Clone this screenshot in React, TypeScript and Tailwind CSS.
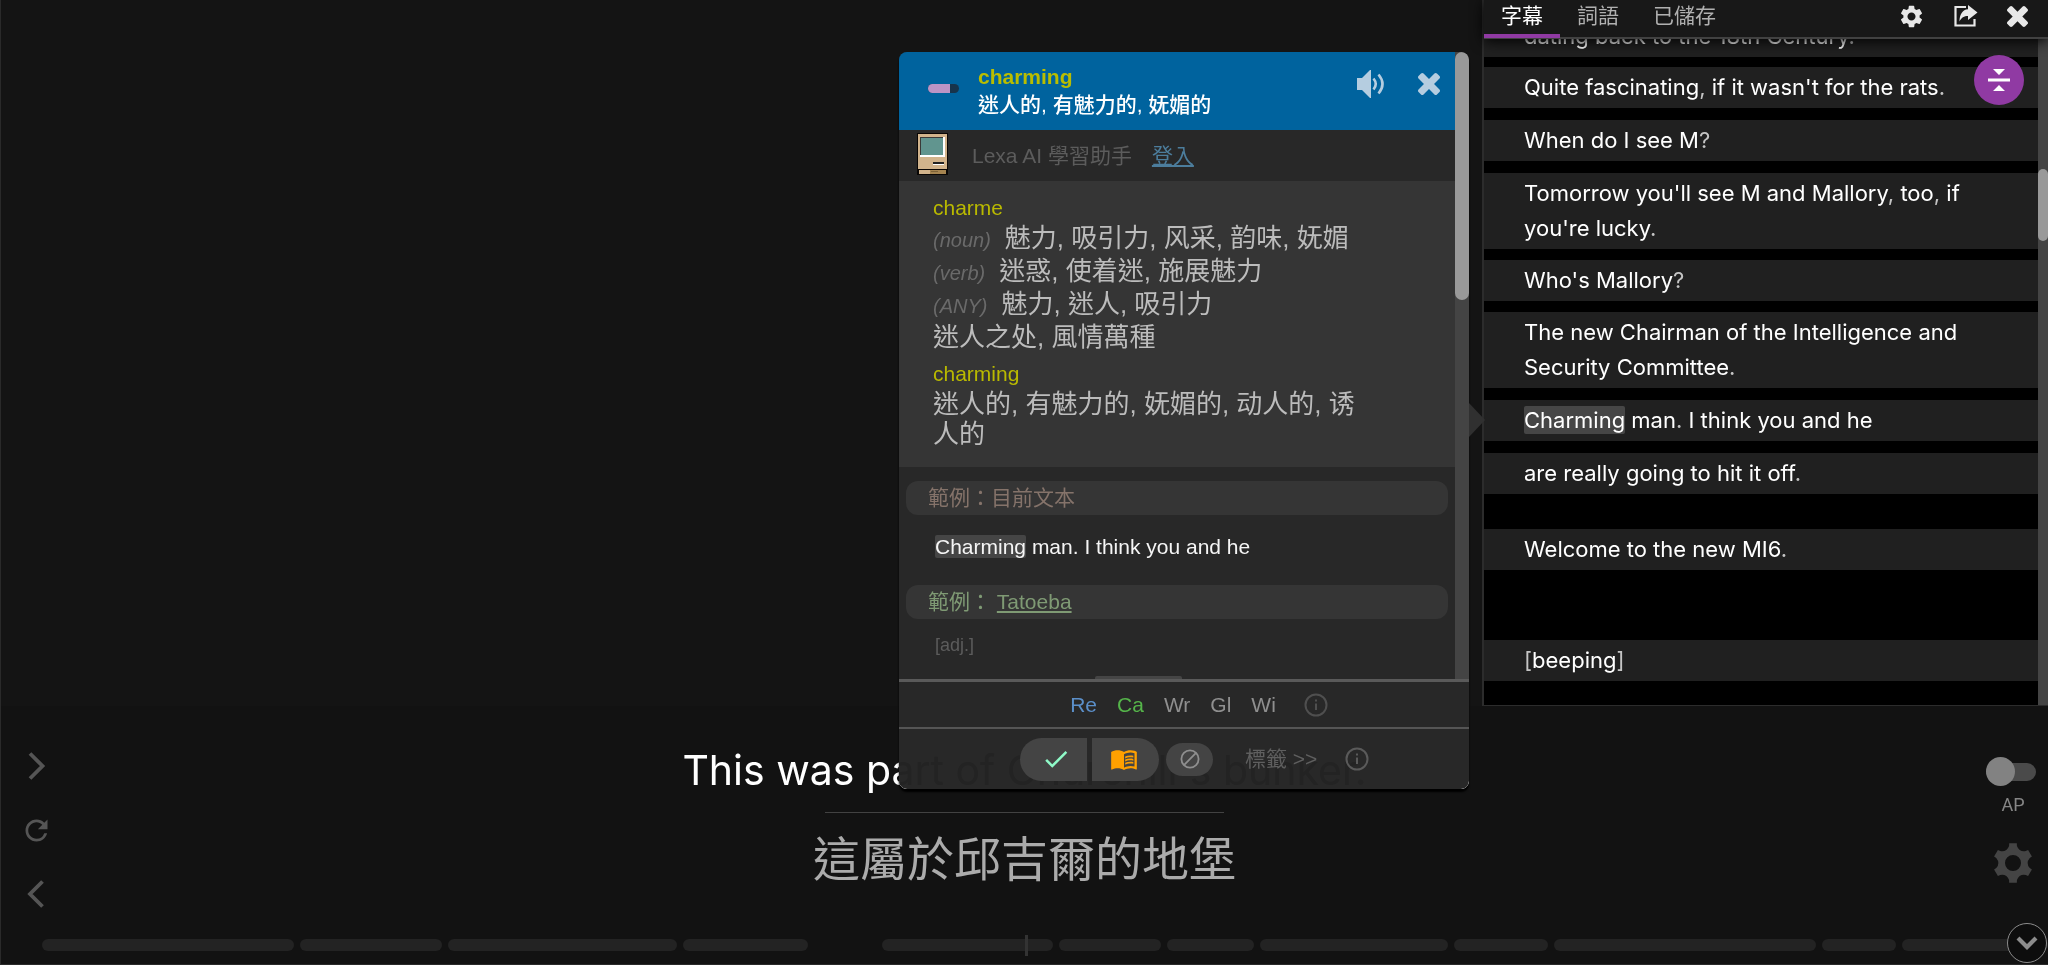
import React, { useState } from 'react';
import { MdCheck, MdMenuBook, MdRefresh, MdSettings } from 'react-icons/md';

interface SubtitleLine {
    text: string;
    gap: string;
    highlight?: string;
}

interface TimelineSegment {
    weight: number;
    empty?: boolean;
}

const SUBTITLES: SubtitleLine[] = [
    { text: 'dating back to the 18th Century.', gap: '' },
    { text: "Quite fascinating, if it wasn't for the rats.", gap: 'mt-[10px]' },
    { text: 'When do I see M?', gap: 'mt-3' },
    { text: "Tomorrow you'll see M and Mallory, too, if you're lucky.", gap: 'mt-3' },
    { text: "Who's Mallory?", gap: 'mt-[11px]' },
    { text: 'The new Chairman of the Intelligence and Security Committee.', gap: 'mt-[11px]' },
    { text: ' man. I think you and he', gap: 'mt-3', highlight: 'Charming' },
    { text: 'are really going to hit it off.', gap: 'mt-3' },
    { text: 'Welcome to the new MI6.', gap: 'mt-[35px]' },
    { text: '[beeping]', gap: 'mt-[70px]' },
];

const SEGMENTS: TimelineSegment[] = [
    { weight: 253 },
    { weight: 142 },
    { weight: 230 },
    { weight: 125 },
    { weight: 62, empty: true },
    { weight: 172 },
    { weight: 102 },
    { weight: 87 },
    { weight: 188 },
    { weight: 95 },
    { weight: 262 },
    { weight: 75 },
    { weight: 146 },
];

const DICT_LINKS = [
    { label: 'Re', color: 'text-[#5b8fc9]' },
    { label: 'Ca', color: 'text-[#55b54a]' },
    { label: 'Wr', color: 'text-[#8f8f8f]' },
    { label: 'Gl', color: 'text-[#8f8f8f]' },
    { label: 'Wi', color: 'text-[#8f8f8f]' },
];

const TABS = ['字幕', '詞語', '已儲存'];

const CloseIcon = ({ className }: { className?: string }) => (
    <svg viewBox="110 366 1188 1188" fill="currentColor" className={className}>
        <path d="M1298 1322q0 40-28 68l-136 136q-28 28-68 28t-68-28l-294-294-294 294q-28 28-68 28t-68-28l-136-136q-28-28-28-68t28-68l294-294-294-294q-28-28-28-68t28-68l136-136q28-28 68-28t68 28l294 294 294-294q28-28 68-28t68 28l136 136q28 28 28 68t-28 68l-294 294 294 294q28 28 28 68z" />
    </svg>
);

const VolumeIcon = () => (
    <svg viewBox="0 0 28 28" className="h-7 w-7" fill="none" stroke="currentColor">
        <path d="M0 8h5l8-8h1v28h-1l-8-8H0z" fill="currentColor" stroke="none" />
        <path d="M16.5 8.5q4.5 5.5 0 11" strokeWidth="2.6" />
        <path d="M21.5 4.5q8 9.5 0 19" strokeWidth="2.6" />
    </svg>
);

const ShareIcon = () => (
    <svg viewBox="0 0 24 22" className="h-[22px] w-6" fill="none">
        <path d="M12 2H1.500v18.500h19V14" stroke="currentColor" strokeWidth="2.200" />
        <path d="M14 0l9.500 7.500L14 15v-4c-4 0-6.500 1.500-8.500 5.500 0-7 3-12 8.500-12.300z" fill="currentColor" />
    </svg>
);

const CollapseIcon = () => (
    <svg viewBox="0 0 22 22" className="h-[22px] w-[22px]" fill="currentColor">
        <path d="M5 0h12l-6 6zM0 9.500h22v3H0zM5 22h12l-6-6z" />
    </svg>
);

const InfoIcon = () => (
    <svg viewBox="0 0 24 24" className="h-6 w-6" fill="none" stroke="currentColor" strokeWidth="2">
        <circle cx="12" cy="12" r="10.500" />
        <path d="M12 10.500V17M12 6.500v2" />
    </svg>
);

const BlockIcon = () => (
    <svg viewBox="0 0 20 20" className="h-5 w-5" fill="none" stroke="currentColor" strokeWidth="1.800">
        <circle cx="10" cy="10" r="8.600" />
        <path d="M4.200 15.800L15.800 4.200" />
    </svg>
);

const ComputerIcon = () => (
    <svg viewBox="0 0 31 42" className="h-[42px] w-[31px]" shapeRendering="crispEdges">
        <rect width="31" height="42" fill="#0a0705" />
        <rect x="1" y="1" width="29" height="35" fill="#d2b48c" />
        <rect x="3" y="4" width="24" height="18" fill="#3a3a38" />
        <path d="M26 4h2v20H3v-2h23z" fill="#fff" />
        <rect x="4" y="5" width="22" height="17" fill="#61958f" />
        <rect x="16" y="29" width="11" height="2" fill="#222" />
        <rect x="16" y="31" width="11" height="1" fill="#fff" />
        <rect x="2" y="37" width="27" height="4" fill="#d2b48c" />
        <rect x="13" y="37" width="16" height="4" fill="#a58450" />
        <path d="M14 38h7v1h-7z" fill="#7d6238" />
    </svg>
);

// Six narrow teeth with hollow curves between them
const GearIcon = () => {
    const point = (deg: number, r: number) => {
        const a = (deg * Math.PI) / 180;
        return `${(20 + r * Math.sin(a)).toFixed(2)} ${(20 - r * Math.cos(a)).toFixed(2)}`;
    };
    const d = [0, 60, 120, 180, 240, 300]
        .map((k) => `${k === 0 ? 'M' : 'L'}${point(k - 11, 20)}L${point(k + 11, 20)}L${point(k + 13, 17.5)}Q${point(k + 30, 12.5)} ${point(k + 47, 17.5)}`)
        .join('');
    return (
        <svg viewBox="0 0 40 40" className="h-10 w-10" fill="currentColor">
            <path fillRule="evenodd" d={`${d}ZM20 12a8 8 0 1 0 0 16a8 8 0 1 0 0-16Z`} />
        </svg>
    );
};

const Chevron = ({ d }: { d: string }) => (
    <svg viewBox="0 0 28 28" className="h-7 w-7" fill="none" stroke="currentColor" strokeWidth="3.800">
        <path d={d} />
    </svg>
);

const Words = ({ text }: { text: string }) => (
    <>
        {text.split(/([.,?[\]])/).map((part, i) =>
            i % 2 ? <span key={i} className="text-[#c4c4c4]">{part}</span> : part
        )}
    </>
);

const Sense = ({ pos, children }: { pos?: string; children: React.ReactNode }) => (
    <li className="mb-[3px] text-[26px] leading-[30px]">
        {pos && <i className="mr-[14px] text-xl leading-none text-[#6a6a6a]">({pos})</i>}
        {children}
    </li>
);

const WordPopup = () => (
    <section className="absolute top-[52px] right-[579px] z-20 w-[570px]">
        {/* pointer towards the selected subtitle */}
        <div className="absolute top-[351px] -right-4 h-0 w-0 border-y-[17px] border-l-[16px] border-y-transparent border-l-[#303030]" />

        <div className="flex flex-col overflow-hidden rounded-lg shadow-[0_3px_2px_black]">
            <div className="flex h-[627px]">
                <div className="min-w-0 flex-1 overflow-hidden bg-[#282828]">
                    <header className="flex h-[78px] items-center bg-[#00639e] pl-[29px]">
                        <div className="mt-[-6px] h-[9px] w-[31px] overflow-hidden rounded-full bg-[#17344c]">
                            <div className="h-full w-[22px] bg-[#bb94c5]" />
                        </div>
                        <div className="ml-[19px] flex-1 text-[21px] leading-7">
                            <h2 className="font-bold text-[#b9bd00]">charming</h2>
                            <p className="font-medium text-white">迷人的, 有魅力的, 妩媚的</p>
                        </div>
                        <div className="mb-[14px] flex items-center gap-[33px] pr-[15px] text-[#b5cde0]">
                            <button aria-label="發音"><VolumeIcon /></button>
                            <button aria-label="關閉"><CloseIcon className="h-[22px] w-[22px]" /></button>
                        </div>
                    </header>

                    <div className="flex h-[51px] items-center pl-[18px] text-[21px] text-[#5c5c5c]">
                        <div className="-mt-1"><ComputerIcon /></div>
                        <span className="ml-6">Lexa AI 學習助手</span>
                        <a href="#login" className="ml-5 text-[#4c7d9c] underline decoration-2 underline-offset-2">登入</a>
                    </div>

                    <div className="bg-[#353535] pt-3 pr-20 pb-[15px] pl-[34px] text-[#bcbcbc]">
                        <h3 className="text-[21px] leading-[30px] text-[#b9b900]">charme</h3>
                        <ul className="mb-[7px]">
                            <Sense pos="noun">魅力, 吸引力, 风采, 韵味, 妩媚</Sense>
                            <Sense pos="verb">迷惑, 使着迷, 施展魅力</Sense>
                            <Sense pos="ANY">魅力, 迷人, 吸引力</Sense>
                            <Sense>迷人之处, 風情萬種</Sense>
                        </ul>
                        <h3 className="text-[21px] leading-[30px] text-[#b9b900]">charming</h3>
                        <ul>
                            <Sense>迷人的, 有魅力的, 妩媚的, 动人的, 诱人的</Sense>
                        </ul>
                    </div>

                    <div className="px-[7px] pt-[14px] text-[21px]">
                        <h4 className="rounded-xl bg-[#353535] px-[22px] leading-[34px] text-[#85736a]">範例：目前文本</h4>
                        <p className="px-[29px] pt-[15px] pb-[21px] leading-[34px] text-[#f5f5f5]">
                            <mark className="rounded-xs bg-[#454545] text-inherit">Charming</mark> man. I think you and he
                        </p>
                        <h4 className="rounded-xl bg-[#353535] px-[22px] leading-[34px] text-[#7f9a74]">
                            範例： <a href="#tatoeba" className="underline decoration-2 underline-offset-2">Tatoeba</a>
                        </h4>
                        <p className="px-[29px] pt-[10px] text-lg leading-8 text-[#5c5c5c]">[adj.]</p>
                        <p className="px-[29px] pt-[10px] leading-[34px] text-[#8a8a8a]">
                            He's often called <mark className="rounded-xs bg-[#454545] text-inherit">charming</mark>.
                        </p>
                    </div>
                </div>
                <div className="w-[14px] bg-[#444]">
                    <div className="h-[248px] rounded-full bg-[#999]" />
                </div>
            </div>

            <nav className="flex h-12 items-center justify-center gap-5 border-t-[3px] border-[#5a5a5a] bg-[#282828] pl-[30px] text-[21px]">
                {DICT_LINKS.map((link) => (
                    <a key={link.label} href={`#${link.label}`} className={link.color}>{link.label}</a>
                ))}
                <button aria-label="說明" className="ml-2 text-[#4f4f4f]"><InfoIcon /></button>
            </nav>

            <footer className="flex h-[62px] items-center border-t-2 border-[#555] bg-[#242424]/98 pl-[121px] backdrop-invert">
                <button aria-label="已知" className="flex h-[43px] w-[67px] items-center justify-center rounded-l-full bg-[#444] pl-1">
                    <MdCheck className="h-[30px] w-[30px] text-[#8ffac8]" />
                </button>
                <button aria-label="學習中" className="ml-[5px] flex h-[43px] w-[67px] items-center justify-center rounded-r-full bg-[#444] pr-1">
                    <MdMenuBook className="h-7 w-7 text-[#ffa000]" />
                </button>
                <button aria-label="忽略" className="ml-[7px] flex h-[33px] w-[47px] items-center justify-center rounded-full bg-[#444] text-[#8f8f8f]">
                    <BlockIcon />
                </button>
                <button className="ml-8 text-[21px] text-[#5f5f5f]">標籤 &gt;&gt;</button>
                <button aria-label="說明" className="ml-7 text-[#5a5a5a]"><InfoIcon /></button>
            </footer>
        </div>
    </section>
);

const SubtitlePanel = () => {
    const [tab, setTab] = useState(TABS[0]);

    return (
        <aside className="relative flex w-[566px] flex-col border-b border-l-2 border-[#2c2c2c] bg-black">
            <header className="relative z-10 flex h-[39px] items-stretch border-b-2 border-[#414141] bg-[#181818] shadow-[0_2px_14px_black]">
                {TABS.map((name) => (
                    <button
                        key={name}
                        onClick={() => setTab(name)}
                        className={`-mb-px border-b-4 px-[17px] pb-[2px] text-[21px] leading-8 ${tab === name ? 'border-[#903aa3] text-white' : 'border-transparent text-[#b0b0b0]'}`}
                    >
                        {name}
                    </button>
                ))}
                <div className="ml-auto flex items-center gap-[29px] pr-5 pb-[5px] text-[#e8e8e8]">
                    <button aria-label="設定"><MdSettings className="h-[27px] w-[27px]" /></button>
                    <button aria-label="匯出"><ShareIcon /></button>
                    <button aria-label="關閉"><CloseIcon className="h-[21px] w-[21px]" /></button>
                </div>
            </header>

            <div className="flex min-h-0 flex-1">
                <ul className="-mt-[23px] flex-1 overflow-hidden font-['Inter','Liberation_Sans',sans-serif] text-[22px] leading-[35px] text-white">
                    {SUBTITLES.map((line) => (
                        <li key={line.text} className={`bg-[#202020] py-[3px] pr-12 pl-10 ${line.gap}`}>
                            {line.highlight && <mark className="rounded-xs bg-[#464646] py-px text-inherit">{line.highlight}</mark>}
                            <Words text={line.text} />
                        </li>
                    ))}
                </ul>
                <div className="w-[10px] bg-[#444] pt-[130px]">
                    <div className="h-[72px] rounded-full bg-[#999]" />
                </div>
            </div>

            <button aria-label="收合" className="absolute top-[55px] right-6 z-10 flex h-[50px] w-[50px] items-center justify-center rounded-full bg-[#903aa3] text-white">
                <CollapseIcon />
            </button>
        </aside>
    );
};

const App: React.FC = () => {
    const [autoPause, setAutoPause] = useState(false);

    return (
        <div className="relative flex h-screen flex-col overflow-hidden border-b border-l border-[#2a2a2a] bg-[#141414] font-['Liberation_Sans','Noto_Sans_CJK_TC',sans-serif]">
            <div className="flex min-h-0 flex-1">
                <main className="flex-1" />
                <SubtitlePanel />
            </div>

            <WordPopup />

            <div className="flex h-[258px] flex-col bg-[#121212]">
                <div className="flex flex-1">
                    <div className="flex w-[70px] flex-col items-center pt-7 text-[#555]">
                        <button aria-label="下一句" className="flex h-16 items-center"><Chevron d="M8 1.500L20.500 14 8 26.500" /></button>
                        <button aria-label="重播" className="flex h-16 items-center"><MdRefresh className="h-[33px] w-[33px]" /></button>
                        <button aria-label="上一句" className="flex h-16 items-center"><Chevron d="M20.500 1.500L8 14l12.500 12.500" /></button>
                    </div>

                    <div className="flex flex-1 flex-col items-center pt-[35px]">
                        <p className="font-['Inter','Liberation_Sans',sans-serif] text-[41px] leading-[58px] text-white">
                            <Words text="This was part of Churchill's bunker." />
                        </p>
                        <hr className="mt-[13px] w-[399px] border-[#424242]" />
                        <p className="mt-[18px] text-[47px] leading-[58px] text-[#ababab]">這屬於邱吉爾的地堡</p>
                    </div>

                    <div className="flex w-[70px] flex-col items-center pt-[51px]">
                        <label className="flex cursor-pointer flex-col items-center text-lg leading-6 text-[#868686]">
                            <span className="relative mr-1 flex h-[29px] w-[50px] items-center">
                                <input
                                    type="checkbox"
                                    checked={autoPause}
                                    onChange={(e) => setAutoPause(e.target.checked)}
                                    className="peer h-[18px] w-full appearance-none rounded-full bg-[#4a4a4a]"
                                />
                                <span className="absolute left-0 h-[29px] w-[29px] rounded-full bg-[#828282] peer-checked:left-[21px]" />
                            </span>
                            <span className="mt-[7px] font-['Roboto',sans-serif]">AP</span>
                        </label>
                        <button aria-label="設定" className="mt-[26px] text-[#444]"><GearIcon /></button>
                    </div>
                </div>

                <div className="relative flex h-[25px] gap-[6px] pl-[41px]">
                    {SEGMENTS.map((seg, i) => (
                        <div
                            key={i}
                            className={`h-3 basis-0 rounded-full ${seg.empty ? '' : 'bg-[#232323]'}`}
                            style={{ flexGrow: seg.weight }}
                        />
                    ))}
                    <div className="absolute -top-1 left-1/2 h-[21px] w-[3px] bg-[#333]" />
                    <button aria-label="收起" className="absolute right-px bottom-px flex h-10 w-10 items-center justify-center rounded-full border border-[#8c8c8c] bg-[#0d0d0d] text-[#8c8c8c]">
                        <svg viewBox="0 0 22 14" className="h-[14px] w-[22px]" fill="none" stroke="currentColor" strokeWidth="4.200">
                            <path d="M2 2l9 9 9-9" />
                        </svg>
                    </button>
                </div>
            </div>
        </div>
    );
};

export default App;
